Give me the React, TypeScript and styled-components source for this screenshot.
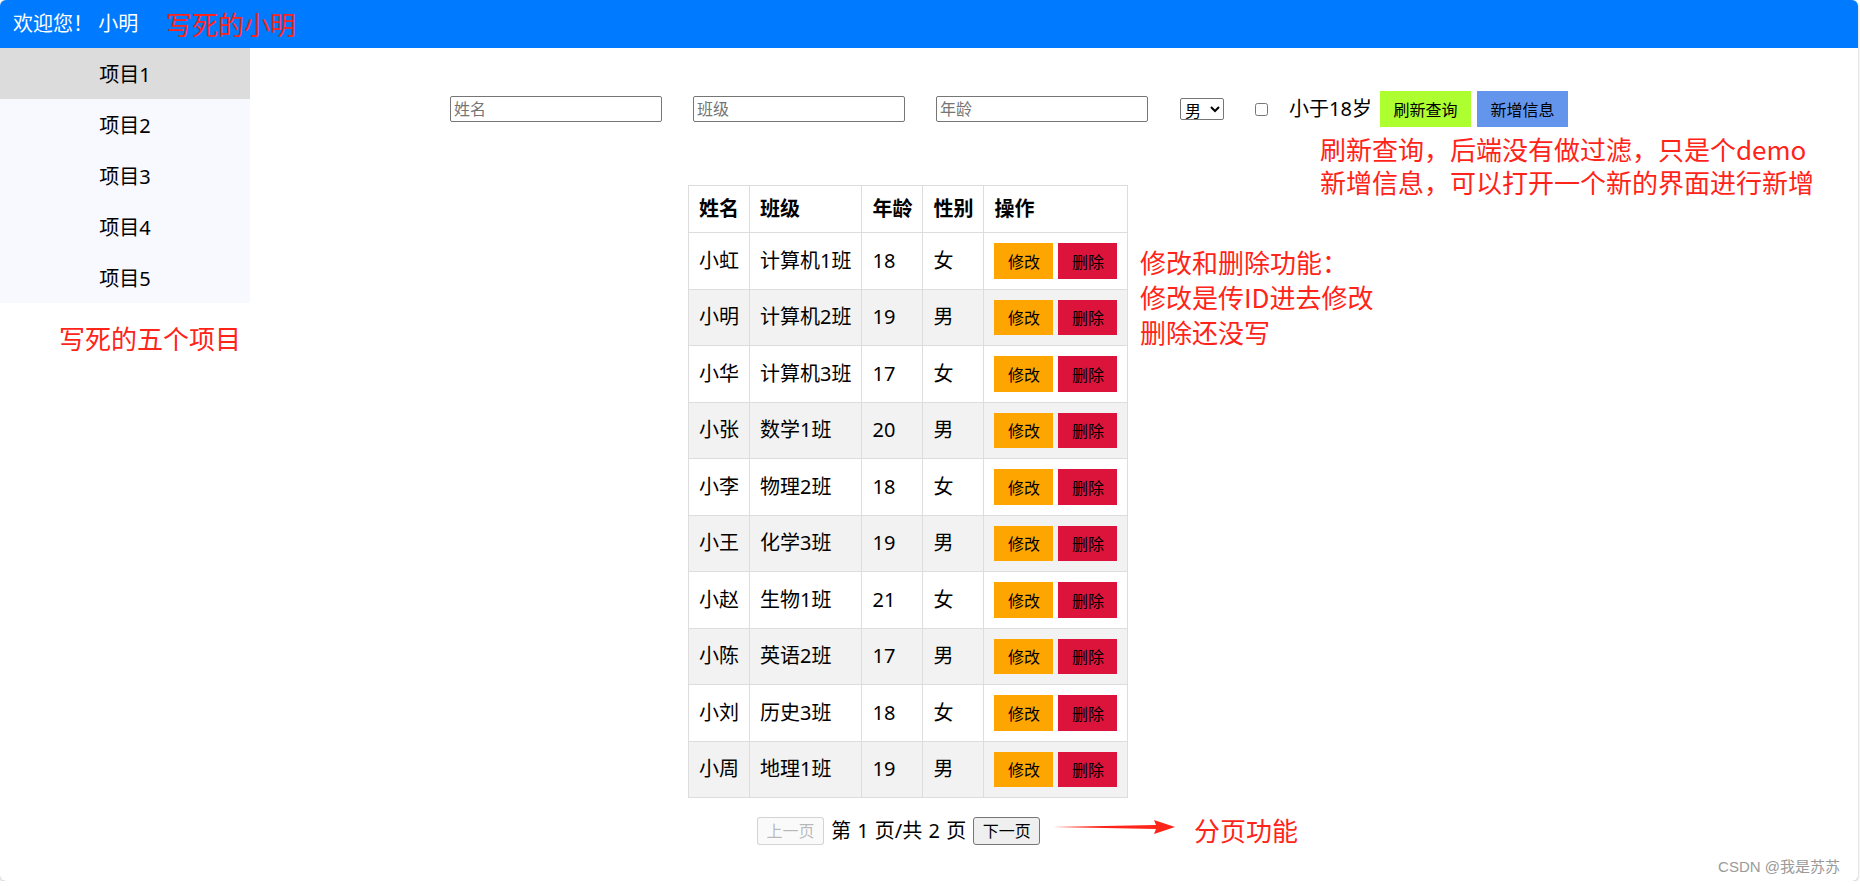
import React from "react";
import styled, { createGlobalStyle } from "styled-components";

const GlobalStyle = createGlobalStyle`
  html, body { margin: 0; padding: 0; background: #ffffff; }
  body { font-family: "Noto Sans", "Noto Sans CJK SC", sans-serif; color: #000; }
  * { box-sizing: border-box; }
`;

const FONT = `"Noto Sans", "Noto Sans CJK SC", sans-serif`;
const RED = "#ff2419";

const Page = styled.div`
  position: relative;
  width: 1858px;
  height: 881px;
  overflow: hidden;
  background: #fff;
  border-radius: 6px;
  box-shadow: 0 1px 3px rgba(0, 0, 0, 0.28);
`;

const Header = styled.header`
  height: 48px;
  background: #007bff;
  color: #fff;
  display: flex;
  align-items: center;
  padding-left: 13px;
  font-size: 20px;
  line-height: 26px;
`;

const Body = styled.div`
  display: flex;
  align-items: flex-start;
`;

const Sidebar = styled.nav`
  width: 250px;
  display: flex;
  flex-direction: column;
`;

const NavItem = styled.div<{ $active?: boolean }>`
  height: 51px;
  display: flex;
  align-items: center;
  justify-content: center;
  font-size: 20px;
  background: ${(p) => (p.$active ? "#dcdcdc" : "#f8f8ff")};
`;

const Main = styled.main`
  flex: 1;
  display: flex;
  flex-direction: column;
  align-items: flex-start;
  padding-top: 43px;
`;

const Toolbar = styled.div`
  display: flex;
  align-items: center;
  margin-left: 200px;
  height: 36px;
`;

const TextInput = styled.input`
  width: 212px;
  height: 26px;
  margin: 0 31px 0 0;
  padding: 0 3px;
  border: 1px solid #767676;
  border-radius: 2px;
  font-family: ${FONT};
  font-size: 16px;
  &::placeholder { color: #757575; }
`;

const Select = styled.select`
  width: 44px;
  height: 22px;
  margin: 0 31px 0 1px;
  padding: 0;
  border: 1px solid #767676;
  border-radius: 2px;
  font-family: ${FONT};
  font-size: 16px;
  background: #fff;
  color: #000;
`;

const Check = styled.input`
  width: 13px;
  height: 13px;
  margin: 0 21px 0 0;
`;

const CheckLabel = styled.span`
  font-size: 20px;
  line-height: 26px;
  margin-right: 8px;
`;

const ToolButton = styled.button<{ $bg: string }>`
  height: 36px;
  padding: 0 13.5px;
  margin-right: 6px;
  border: none;
  background: ${(p) => p.$bg};
  color: #000;
  font-family: ${FONT};
  font-size: 16px;
  cursor: pointer;
`;

const TableSection = styled.div`
  margin-left: 438px;
  margin-top: 58px;
  display: flex;
  flex-direction: column;
  align-items: flex-start;
`;

const Table = styled.table`
  border-collapse: collapse;
  font-size: 20px;
  line-height: 26px;
`;

const Th = styled.th<{ $w: number }>`
  width: ${(p) => p.$w}px;
  padding: 10px;
  border: 1px solid #ddd;
  text-align: left;
  font-weight: 700;
  white-space: nowrap;
`;

const Tr = styled.tr<{ $even?: boolean }>`
  background: ${(p) => (p.$even ? "#f2f2f2" : "#fff")};
`;

const Td = styled.td`
  padding: 10px;
  border: 1px solid #ddd;
  white-space: nowrap;
  vertical-align: middle;
`;

const Actions = styled.div`
  display: flex;
  gap: 5px;
`;

const ActionButton = styled.button<{ $bg: string }>`
  width: 59px;
  height: 35.5px;
  padding: 0;
  border: none;
  background: ${(p) => p.$bg};
  color: #000;
  font-family: ${FONT};
  font-size: 16px;
  cursor: pointer;
`;

const Pager = styled.div`
  display: flex;
  align-items: center;
  margin-top: 19px;
  margin-left: 69px;
  gap: 7px;
`;

const PageButton = styled.button`
  height: 28px;
  padding: 0 8.5px;
  border: 1px solid #767676;
  border-radius: 3px;
  background: #efefef;
  color: #000;
  font-family: ${FONT};
  font-size: 16px;
  line-height: 20px;
  &:disabled {
    color: rgba(16, 16, 16, 0.3);
    border-color: rgba(118, 118, 118, 0.3);
    background: rgba(239, 239, 239, 0.3);
  }
`;

const PageInfo = styled.span`
  font-size: 20px;
  line-height: 26px;
  word-spacing: 1px;
`;

const Note = styled.div<{ $x: number; $y: number; $lh?: number }>`
  position: absolute;
  left: ${(p) => p.$x}px;
  top: ${(p) => p.$y}px;
  color: ${RED};
  font-family: "Noto Sans CJK SC", sans-serif;
  font-size: 26px;
  line-height: ${(p) => p.$lh ?? 26}px;
  white-space: nowrap;
  pointer-events: none;
`;

const Arrow = styled.svg`
  position: absolute;
  left: 1050px;
  top: 817px;
`;

const Watermark = styled.div`
  position: absolute;
  right: 18px;
  top: 857px;
  color: #9a9a9a;
  font-family: "Liberation Sans", "Noto Sans CJK SC", sans-serif;
  font-size: 15px;
  line-height: 20px;
`;

const rows = [
  ["小虹", "计算机1班", "18", "女"],
  ["小明", "计算机2班", "19", "男"],
  ["小华", "计算机3班", "17", "女"],
  ["小张", "数学1班", "20", "男"],
  ["小李", "物理2班", "18", "女"],
  ["小王", "化学3班", "19", "男"],
  ["小赵", "生物1班", "21", "女"],
  ["小陈", "英语2班", "17", "男"],
  ["小刘", "历史3班", "18", "女"],
  ["小周", "地理1班", "19", "男"],
];

export default function App() {
  return (
    <Page>
      <GlobalStyle />
      <Header>欢迎您！ 小明</Header>
      <Body>
        <Sidebar>
          {[1, 2, 3, 4, 5].map((n) => (
            <NavItem key={n} $active={n === 1}>
              项目{n}
            </NavItem>
          ))}
        </Sidebar>
        <Main>
          <Toolbar>
            <TextInput placeholder="姓名" />
            <TextInput placeholder="班级" />
            <TextInput placeholder="年龄" />
            <Select defaultValue="男">
              <option>男</option>
              <option>女</option>
            </Select>
            <Check type="checkbox" />
            <CheckLabel>小于18岁</CheckLabel>
            <ToolButton $bg="#adff2f">刷新查询</ToolButton>
            <ToolButton $bg="#6495ed">新增信息</ToolButton>
          </Toolbar>
          <TableSection>
            <Table>
              <thead>
                <tr>
                  <Th $w={40}>姓名</Th>
                  <Th $w={92}>班级</Th>
                  <Th $w={39}>年龄</Th>
                  <Th $w={40}>性别</Th>
                  <Th $w={123}>操作</Th>
                </tr>
              </thead>
              <tbody>
                {rows.map((r, i) => (
                  <Tr key={r[0]} $even={i % 2 === 1}>
                    <Td>{r[0]}</Td>
                    <Td>{r[1]}</Td>
                    <Td>{r[2]}</Td>
                    <Td>{r[3]}</Td>
                    <Td>
                      <Actions>
                        <ActionButton $bg="#ffa500">修改</ActionButton>
                        <ActionButton $bg="#dc143c">删除</ActionButton>
                      </Actions>
                    </Td>
                  </Tr>
                ))}
              </tbody>
            </Table>
            <Pager>
              <PageButton disabled>上一页</PageButton>
              <PageInfo>第 1 页/共 2 页</PageInfo>
              <PageButton>下一页</PageButton>
            </Pager>
          </TableSection>
        </Main>
      </Body>

      <Note $x={166} $y={11}>写死的小明</Note>
      <Note $x={59} $y={325}>写死的五个项目</Note>
      <Note $x={1320} $y={132} $lh={33}>
        刷新查询，后端没有做过滤，只是个demo
        <br />
        新增信息，可以打开一个新的界面进行新增
      </Note>
      <Note $x={1140} $y={244} $lh={35}>
        修改和删除功能：
        <br />
        修改是传ID进去修改
        <br />
        删除还没写
      </Note>
      <Note $x={1194} $y={817}>分页功能</Note>
      <Arrow width="128" height="20" viewBox="0 0 128 20">
        <polygon points="3,10 106,8 104,3 125,10 104,17 106,12" fill={RED} />
      </Arrow>
      <Watermark>CSDN @我是苏苏</Watermark>
    </Page>
  );
}
